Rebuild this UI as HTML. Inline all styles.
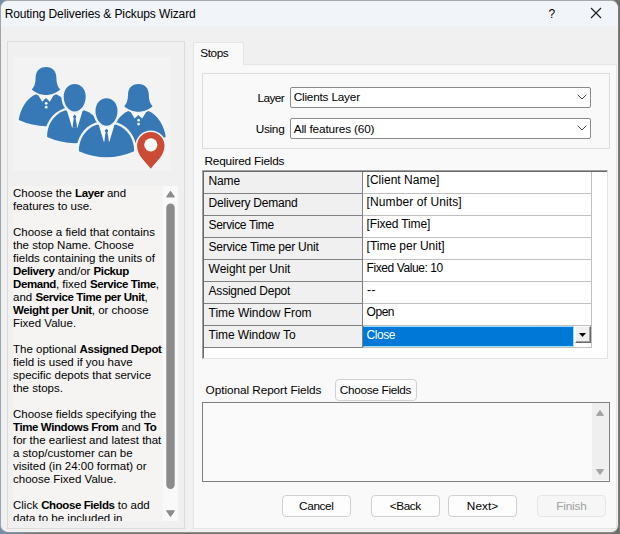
<!DOCTYPE html>
<html><head><meta charset="utf-8">
<style>
*{box-sizing:border-box;margin:0;padding:0}
html,body{width:620px;height:534px;overflow:hidden;background:linear-gradient(to right,#7390ab 0,#7390ab 12px,#6f706c 40px)}
body{font-family:"Liberation Sans",sans-serif;font-size:11.8px;color:#000;position:relative}
.abs{position:absolute}
.t{white-space:nowrap;line-height:14px}
#win{left:0;top:0;width:619px;height:533px;background:#f0f0f0;border-radius:8px;overflow:hidden;border:1px solid #7b7d7c;border-top-color:#a8a8a8;border-left-color:#9aa5ae;border-bottom-color:#8e8e8e}
#titlebar{left:1px;top:1px;width:617px;height:25px;background:#f1f4f9;border-radius:7px 7px 0 0}
#leftpanel{left:7px;top:41px;width:178px;height:488px;border:1px solid #dcdcdc;background:#f0f0f0}
#imgbox{left:13px;top:57px;width:158px;height:114px;background:#f3f3f3}
#help{left:13px;top:186px;width:150px;height:335px;padding-top:1px;background:#f5f4f3;overflow:hidden;font-size:11.5px;line-height:13px;white-space:nowrap}
#help p{margin:0 0 13px 0}
#help b{letter-spacing:-0.4px}
#tabpage{left:193px;top:64px;width:424px;height:465px;background:#f9f9f9;border:1px solid #e5e5e5}
#tab{left:193px;top:42px;width:51px;height:23px;background:#f9f9f9;border:1px solid #e5e5e5;border-bottom:none}
#group{left:202px;top:73px;width:408px;height:76px;border:1px solid #dcdcdc}
.combo{height:21px;background:#fff;border:1px solid #8a8a8a;border-radius:2px}
.btn{height:22px;background:#fdfdfd;border:1px solid #d0d0d0;border-radius:4px}
</style></head><body>
<div id="win" class="abs"></div>
<div id="titlebar" class="abs"></div>
<div class="abs t" style="left:4.70px;top:6.64px;font-size:12px;letter-spacing:-0.109px;">Routing Deliveries &amp; Pickups Wizard</div>
<div class="abs t" style="left:548.60px;top:6.84px;font-size:12px;">?</div>
<svg class="abs" style="left:590px;top:7px" width="12" height="12" viewBox="0 0 12 12"><path d="M1 1L11 11M11 1L1 11" stroke="#1a1a1a" stroke-width="1.1" fill="none"/></svg>
<div id="leftpanel" class="abs"></div>
<div id="imgbox" class="abs"></div>
<svg class="abs" style="left:13px;top:57px;filter:blur(0.35px)" width="158" height="114" viewBox="13 57 158 114">
<g transform="translate(46,67.1)">
<path d="M -27.3,53 C -26.2,43 -19.5,30.5 -9.5,26.8 L 9.5,26.8 C 19.5,30.5 26.2,43 27.3,53 Q 0,65.3 -27.3,53 Z" fill="#3779b6" stroke="#f3f4f5" stroke-width="4.6" stroke-linejoin="round"/>
<path d="M -27.3,53 C -26.2,43 -19.5,30.5 -9.5,26.8 L 9.5,26.8 C 19.5,30.5 26.2,43 27.3,53 Q 0,65.3 -27.3,53 Z" fill="#3779b6"/>
<path d="M -9.2,25.5 L 9.2,25.5 L 3.8,34.6 L 0,30.9 L -3.8,34.6 Z" fill="#fbfcfe"/>
<circle cx="0.2" cy="36.2" r="1.35" fill="#fbfcfe"/><circle cx="0.2" cy="40.1" r="1.35" fill="#fbfcfe"/>
<path d="M 0,0 C 6.6,0 10.4,4.6 10.4,10.6 C 10.4,16 11.6,19.8 14.2,22.3 C 10.5,25.6 5,27.8 0,27.8 C -5,27.8 -10.5,25.6 -14.2,22.3 C -11.6,19.8 -10.4,16 -10.4,10.6 C -10.4,4.6 -6.6,0 0,0 Z" fill="#3779b6" stroke="#f3f4f5" stroke-width="3.4"/>
<path d="M 0,0 C 6.6,0 10.4,4.6 10.4,10.6 C 10.4,16 11.6,19.8 14.2,22.3 C 10.5,25.6 5,27.8 0,27.8 C -5,27.8 -10.5,25.6 -14.2,22.3 C -11.6,19.8 -10.4,16 -10.4,10.6 C -10.4,4.6 -6.6,0 0,0 Z" fill="#3779b6"/>
</g>
<g transform="translate(138.4,84)">
<path d="M -27.3,53 C -26.2,43 -19.5,30.5 -9.5,26.8 L 9.5,26.8 C 19.5,30.5 26.2,43 27.3,53 Q 0,65.3 -27.3,53 Z" fill="#3779b6" stroke="#f3f4f5" stroke-width="4.6" stroke-linejoin="round"/>
<path d="M -27.3,53 C -26.2,43 -19.5,30.5 -9.5,26.8 L 9.5,26.8 C 19.5,30.5 26.2,43 27.3,53 Q 0,65.3 -27.3,53 Z" fill="#3779b6"/>
<path d="M -9.2,25.5 L 9.2,25.5 L 3.8,34.6 L 0,30.9 L -3.8,34.6 Z" fill="#fbfcfe"/>
<circle cx="0.2" cy="36.2" r="1.35" fill="#fbfcfe"/><circle cx="0.2" cy="40.1" r="1.35" fill="#fbfcfe"/>
<path d="M 0,0 C 6.6,0 10.4,4.6 10.4,10.6 C 10.4,16 11.6,19.8 14.2,22.3 C 10.5,25.6 5,27.8 0,27.8 C -5,27.8 -10.5,25.6 -14.2,22.3 C -11.6,19.8 -10.4,16 -10.4,10.6 C -10.4,4.6 -6.6,0 0,0 Z" fill="#3779b6" stroke="#f3f4f5" stroke-width="3.4"/>
<path d="M 0,0 C 6.6,0 10.4,4.6 10.4,10.6 C 10.4,16 11.6,19.8 14.2,22.3 C 10.5,25.6 5,27.8 0,27.8 C -5,27.8 -10.5,25.6 -14.2,22.3 C -11.6,19.8 -10.4,16 -10.4,10.6 C -10.4,4.6 -6.6,0 0,0 Z" fill="#3779b6"/>
</g>
<g transform="translate(74.7,84)">
<path d="M -27.6,53 C -28,42 -21.5,30.5 -10,26.6 L 10,26.6 C 21.5,30.5 28,42 27.6,53 Q 0,65.3 -27.6,53 Z" fill="#3779b6" stroke="#f3f4f5" stroke-width="4.6" stroke-linejoin="round"/>
<path d="M -27.6,53 C -28,42 -21.5,30.5 -10,26.6 L 10,26.6 C 21.5,30.5 28,42 27.6,53 Q 0,65.3 -27.6,53 Z" fill="#3779b6"/>
<path d="M -8.2,25 L 8.4,25 L 2.9,43.6 L -2.7,43.6 Z" fill="#fbfcfe"/>
<path d="M 0,30.6 L 1.8,32.4 L 0.9,34.3 L 1.7,38.4 L 2.4,43.8 L -2.2,43.8 L -1.5,38.4 L -0.9,34.3 L -1.8,32.4 Z" fill="#3779b6"/>
<path d="M 0,0 C 6.6,0 11,5.6 11,12.6 C 11,20.5 6.2,27.6 0,27.6 C -6.2,27.6 -11,20.5 -11,12.6 C -11,5.6 -6.6,0 0,0 Z" fill="#3779b6" stroke="#f3f4f5" stroke-width="4.6"/>
<path d="M 0,0 C 6.6,0 11,5.6 11,12.6 C 11,20.5 6.2,27.6 0,27.6 C -6.2,27.6 -11,20.5 -11,12.6 C -11,5.6 -6.6,0 0,0 Z" fill="#3779b6"/>
</g>
<g transform="translate(106.5,98.2)">
<path d="M -27.6,53 C -28,42 -21.5,30.5 -10,26.6 L 10,26.6 C 21.5,30.5 28,42 27.6,53 Q 0,65.3 -27.6,53 Z" fill="#3779b6" stroke="#f3f4f5" stroke-width="4.6" stroke-linejoin="round"/>
<path d="M -27.6,53 C -28,42 -21.5,30.5 -10,26.6 L 10,26.6 C 21.5,30.5 28,42 27.6,53 Q 0,65.3 -27.6,53 Z" fill="#3779b6"/>
<path d="M -8.2,25 L 8.4,25 L 2.9,43.6 L -2.7,43.6 Z" fill="#fbfcfe"/>
<path d="M 0,30.6 L 1.8,32.4 L 0.9,34.3 L 1.7,38.4 L 2.4,43.8 L -2.2,43.8 L -1.5,38.4 L -0.9,34.3 L -1.8,32.4 Z" fill="#3779b6"/>
<path d="M 0,0 C 6.6,0 11,5.6 11,12.6 C 11,20.5 6.2,27.6 0,27.6 C -6.2,27.6 -11,20.5 -11,12.6 C -11,5.6 -6.6,0 0,0 Z" fill="#3779b6" stroke="#f3f4f5" stroke-width="4.6"/>
<path d="M 0,0 C 6.6,0 11,5.6 11,12.6 C 11,20.5 6.2,27.6 0,27.6 C -6.2,27.6 -11,20.5 -11,12.6 C -11,5.6 -6.6,0 0,0 Z" fill="#3779b6"/>
</g>
<path d="M 150.8,168.8 C 145.3,161.3 137.10000000000002,155.8 137.10000000000002,145.8 A 13.7 13.7 0 1 1 164.5,145.8 C 164.5,155.8 156.3,161.3 150.8,168.8 Z" fill="#cb4b36" stroke="#f3f4f5" stroke-width="3.4" stroke-linejoin="round"/><path d="M 150.8,168.8 C 145.3,161.3 137.10000000000002,155.8 137.10000000000002,145.8 A 13.7 13.7 0 1 1 164.5,145.8 C 164.5,155.8 156.3,161.3 150.8,168.8 Z" fill="#cb4b36"/><circle cx="150.8" cy="144.8" r="6.6" fill="#fff"/>
</svg>
<div id="help" class="abs">
<p>Choose the <b>Layer</b> and<br>features to use.</p>
<p>Choose a field that contains<br>the stop Name. Choose<br>fields containing the units of<br><b>Delivery</b> and/or <b>Pickup<br>Demand</b>, fixed <b>Service Time</b>,<br>and <b>Service Time per Unit</b>,<br><b>Weight per Unit</b>, or choose<br>Fixed Value.</p>
<p>The optional <b>Assigned Depot</b><br>field is used if you have<br>specific depots that service<br>the stops.</p>
<p>Choose fields specifying the<br><b>Time Windows From</b> and <b>To</b><br>for the earliest and latest that<br>a stop/customer can be<br>visited (in 24:00 format) or<br>choose Fixed Value.</p>
<p>Click <b>Choose Fields</b> to add<br>data to be included in<br>reports.</p>
</div>
<div class="abs" style="left:163px;top:186px;width:15px;height:335px;background:#f9f9f9"></div>
<svg class="abs" style="left:163px;top:186px" width="15" height="335" viewBox="163 186 15 335"><path d="M170.5 191.6L174.2 196.8H166.8Z" fill="#8b8b8b" stroke="#8b8b8b" stroke-width="1.2" stroke-linejoin="round"/><rect x="166.3" y="203.6" width="8.4" height="285.4" rx="4.2" fill="#8b8b8b"/><path d="M166.8 510.8H174.2L170.5 516.2Z" fill="#8b8b8b" stroke="#8b8b8b" stroke-width="1.2" stroke-linejoin="round"/></svg>
<div id="tabpage" class="abs"></div><div id="tab" class="abs"></div>
<div class="abs t" style="left:200.30px;top:45.71px;font-size:11.8px;letter-spacing:-0.436px;">Stops</div>
<div id="group" class="abs"></div>
<div class="abs t" style="left:257.50px;top:90.91px;font-size:11.8px;letter-spacing:-0.575px;">Layer</div>
<div class="abs t" style="left:255.70px;top:122.21px;font-size:11.8px;letter-spacing:-0.286px;">Using</div>
<div class="abs combo" style="left:290px;top:87px;width:301px"></div>
<div class="abs combo" style="left:290px;top:118px;width:301px"></div>
<svg class="abs" style="left:577px;top:94px" width="10" height="6" viewBox="0 0 10 6"><path d="M0.7 0.7L5 5L9.3 0.7" stroke="#444" stroke-width="1" fill="none"/></svg>
<svg class="abs" style="left:577px;top:125px" width="10" height="6" viewBox="0 0 10 6"><path d="M0.7 0.7L5 5L9.3 0.7" stroke="#444" stroke-width="1" fill="none"/></svg>
<div class="abs t" style="left:293.70px;top:90.11px;font-size:11.8px;letter-spacing:-0.205px;">Clients Layer</div>
<div class="abs t" style="left:293.70px;top:121.81px;font-size:11.8px;letter-spacing:-0.152px;">All features (60)</div>
<div class="abs t" style="left:204.50px;top:154.41px;font-size:11.8px;letter-spacing:-0.186px;">Required Fields</div>
<div class="abs" style="left:202px;top:170px;width:406px;height:189px;background:#fff;border-left:1px solid #a0a0a0;border-top:1px solid #a0a0a0;border-right:1px solid #e3e3e3;border-bottom:1px solid #e3e3e3"></div>
<div class="abs" style="left:203px;top:171px;width:404px;height:187px;border-left:1px solid #696969;border-top:1px solid #696969"></div>
<div class="abs" style="left:204px;top:172px;width:158px;height:21px;background:#f0f0f0"></div>
<div class="abs" style="left:204px;top:193px;width:159px;height:1px;background:#808080"></div>
<div class="abs" style="left:363px;top:193px;width:229px;height:1px;background:#c0c0c0"></div>
<div class="abs t" style="left:208.60px;top:173.54px;font-size:12px;letter-spacing:-0.156px;">Name</div>
<div class="abs t" style="left:366.60px;top:173.14px;font-size:12px;letter-spacing:0.012px;">[Client Name]</div>
<div class="abs" style="left:204px;top:194px;width:158px;height:21px;background:#f0f0f0"></div>
<div class="abs" style="left:204px;top:215px;width:159px;height:1px;background:#808080"></div>
<div class="abs" style="left:363px;top:215px;width:229px;height:1px;background:#c0c0c0"></div>
<div class="abs t" style="left:208.60px;top:195.54px;font-size:12px;letter-spacing:-0.219px;">Delivery Demand</div>
<div class="abs t" style="left:366.60px;top:195.14px;font-size:12px;letter-spacing:0.102px;">[Number of Units]</div>
<div class="abs" style="left:204px;top:216px;width:158px;height:21px;background:#f0f0f0"></div>
<div class="abs" style="left:204px;top:237px;width:159px;height:1px;background:#808080"></div>
<div class="abs" style="left:363px;top:237px;width:229px;height:1px;background:#c0c0c0"></div>
<div class="abs t" style="left:208.60px;top:217.54px;font-size:12px;letter-spacing:-0.352px;">Service Time</div>
<div class="abs t" style="left:366.60px;top:217.14px;font-size:12px;letter-spacing:-0.149px;">[Fixed Time]</div>
<div class="abs" style="left:204px;top:238px;width:158px;height:21px;background:#f0f0f0"></div>
<div class="abs" style="left:204px;top:259px;width:159px;height:1px;background:#808080"></div>
<div class="abs" style="left:363px;top:259px;width:229px;height:1px;background:#c0c0c0"></div>
<div class="abs t" style="left:208.60px;top:239.54px;font-size:12px;letter-spacing:-0.227px;">Service Time per Unit</div>
<div class="abs t" style="left:366.60px;top:239.14px;font-size:12px;letter-spacing:-0.020px;">[Time per Unit]</div>
<div class="abs" style="left:204px;top:260px;width:158px;height:21px;background:#f0f0f0"></div>
<div class="abs" style="left:204px;top:281px;width:159px;height:1px;background:#808080"></div>
<div class="abs" style="left:363px;top:281px;width:229px;height:1px;background:#c0c0c0"></div>
<div class="abs t" style="left:208.60px;top:261.54px;font-size:12px;letter-spacing:-0.050px;">Weight per Unit</div>
<div class="abs t" style="left:366.60px;top:261.14px;font-size:12px;letter-spacing:-0.421px;">Fixed Value: 10</div>
<div class="abs" style="left:204px;top:282px;width:158px;height:21px;background:#f0f0f0"></div>
<div class="abs" style="left:204px;top:303px;width:159px;height:1px;background:#808080"></div>
<div class="abs" style="left:363px;top:303px;width:229px;height:1px;background:#c0c0c0"></div>
<div class="abs t" style="left:208.60px;top:283.54px;font-size:12px;letter-spacing:-0.227px;">Assigned Depot</div>
<div class="abs t" style="left:367.00px;top:283.14px;font-size:12px;letter-spacing:0.531px;">--</div>
<div class="abs" style="left:204px;top:304px;width:158px;height:21px;background:#f0f0f0"></div>
<div class="abs" style="left:204px;top:325px;width:159px;height:1px;background:#808080"></div>
<div class="abs" style="left:363px;top:325px;width:229px;height:1px;background:#c0c0c0"></div>
<div class="abs t" style="left:208.60px;top:305.54px;font-size:12px;letter-spacing:-0.040px;">Time Window From</div>
<div class="abs t" style="left:366.60px;top:305.14px;font-size:12px;letter-spacing:-0.481px;">Open</div>
<div class="abs" style="left:204px;top:326px;width:158px;height:21px;background:#f0f0f0"></div>
<div class="abs" style="left:204px;top:347px;width:159px;height:1px;background:#808080"></div>
<div class="abs" style="left:363px;top:347px;width:229px;height:1px;background:#c0c0c0"></div>
<div class="abs t" style="left:208.60px;top:327.54px;font-size:12px;letter-spacing:-0.079px;">Time Window To</div>
<div class="abs" style="left:362px;top:172px;width:1px;height:176px;background:#808080"></div>
<div class="abs" style="left:591px;top:172px;width:1px;height:176px;background:#c0c0c0"></div>
<div class="abs" style="left:363px;top:326px;width:211px;height:21px;background:#0078d7;border:1px solid #99e0ff;border-left-color:#0078d7"></div>
<div class="abs t" style="left:366.60px;top:327.54px;font-size:12px;letter-spacing:-0.439px;color:#fff;">Close</div>
<div class="abs" style="left:575px;top:326px;width:16px;height:17px;background:#f0f0f0;border-top:1px solid #fff;border-left:1px solid #fff;border-right:1px solid #696969;border-bottom:1px solid #696969;box-shadow:inset -1px -1px 0 #a0a0a0"></div>
<svg class="abs" style="left:579px;top:333px" width="7" height="4" viewBox="0 0 7 4"><path d="M0 0H7L3.5 4Z" fill="#000"/></svg>
<div class="abs t" style="left:205.60px;top:382.91px;font-size:11.8px;letter-spacing:-0.069px;">Optional Report Fields</div>
<div class="abs btn" style="left:335px;top:379px;width:82px"></div>
<div class="abs t" style="left:339.80px;top:382.91px;font-size:11.8px;letter-spacing:-0.309px;">Choose Fields</div>
<div class="abs" style="left:202px;top:402px;width:408px;height:80px;border:1px solid #7f7f7f;background:#fafafa"></div>
<div class="abs" style="left:592px;top:403px;width:17px;height:77px;background:#efefef"></div>
<svg class="abs" style="left:592px;top:403px" width="17" height="77" viewBox="592 403 17 77"><path d="M600 410.6L603.5 415.4H596.5Z" fill="#a3a3a3" stroke="#a3a3a3" stroke-width="1" stroke-linejoin="round"/><path d="M596.5 469.6H603.5L600 474.4Z" fill="#a3a3a3" stroke="#a3a3a3" stroke-width="1" stroke-linejoin="round"/></svg>
<div class="abs btn" style="left:282px;top:495px;width:69px"></div>
<div class="abs t" style="left:299.10px;top:499.41px;font-size:11.8px;letter-spacing:-0.378px;">Cancel</div>
<div class="abs btn" style="left:371px;top:495px;width:69px"></div>
<div class="abs t" style="left:389.85px;top:499.41px;font-size:11.8px;letter-spacing:-0.472px;">&lt;Back</div>
<div class="abs btn" style="left:448px;top:495px;width:69px"></div>
<div class="abs t" style="left:466.80px;top:499.41px;font-size:11.8px;letter-spacing:0.060px;">Next&gt;</div>
<div class="abs btn" style="left:537px;top:495px;width:69px;background:#f6f6f6;border-color:#e6e6e6"></div>
<div class="abs t" style="left:556.25px;top:499.41px;font-size:11.8px;letter-spacing:-0.187px;color:#a0a0a0;">Finish</div>
</body></html>
